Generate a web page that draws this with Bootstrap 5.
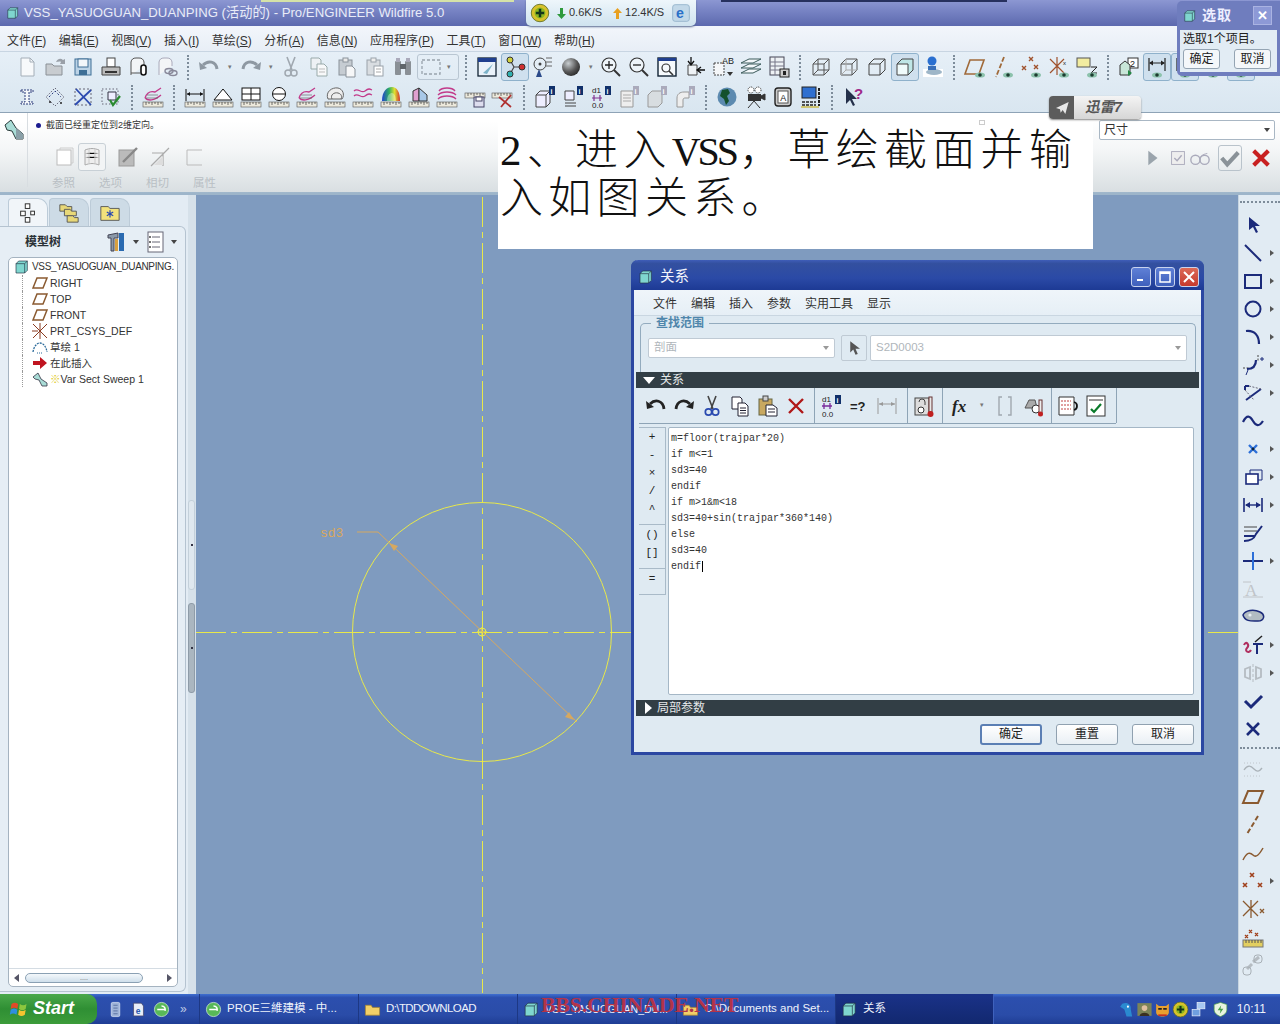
<!DOCTYPE html>
<html lang="zh">

<head>
    <meta charset="UTF-8" />
    <title>VSS_YASUOGUAN_DUANPING - Pro/ENGINEER Wildfire 5.0</title>
    <link href="https://cdn.jsdelivr.net/npm/bootstrap@5.3.0/dist/css/bootstrap.min.css" rel="stylesheet" />
    <style>
        html, body { width: 1280px; height: 1024px; overflow: hidden; margin: 0; }
        body { font-family: "Liberation Sans", "Noto Sans CJK SC", sans-serif; font-size: 12px; color: #222; background: #7f9bbf; line-height: 1.2; }
        .app { width: 1280px; height: 1024px; position: relative; }

        .win-title { height: 26px; background: linear-gradient(#8c97d2, #7a86c6 35%, #5c69ae); color: #e9ecf8; font-size: 13.2px; padding-left: 6px; gap: 4px; }
        .top-strip { top: 0; height: 2px; }
        .strip-a { left: 261px; width: 253px; background: #d5e2a8; }
        .strip-b { left: 721px; width: 286px; background: #26305e; }
        .menu-bar { height: 26px; background: linear-gradient(#f2f6fb, #e8eef6); padding: 6px 0 0 7px; gap: 12.5px; border-bottom: 1px solid #c8d5e2; color: #333; }
        .tool-area { height: 61px; background: linear-gradient(#e6eff7, #d9e6f0); border-bottom: 1px solid #8ea3b6; }
        .tool-row { height: 30px; padding-left: 13px; }
        .cell { width: 28px; height: 28px; flex: none; }
        .cell svg { width: 24px; height: 24px; }
        .cell.on { background: #cfe0ee; border: 1px solid #8fb1cb; border-radius: 3px; }
        .mini { flex: none; height: 28px; font-size: 7px; color: #777; }
        .w14 { width: 14px; }
        .w12 { width: 12px; }
        .vsep { flex: none; width: 2px; height: 25px; margin: 0 6px; border-left: 2px dotted #7d8c9a; }
        .drop-box { width: 42px; height: 26px; flex: none; border: 1px solid #b9c6d2; border-radius: 3px; margin-right: 0; }
        .drop-box svg { width: 24px; height: 24px; margin-left: 1px; }

        .dash { height: 82px; background: linear-gradient(#fff 10%, #f4f6f7 45%, #d9dfe2 96%, #9db5ca 97%); }
        .dash-left { width: 28px; border-right: 1px solid #d8dde1; height: 74px; padding-left: 2px; padding-top: 4px; }
        .dash-left svg { width: 24px; height: 24px; }
        .dash-msg { font-size: 9px; padding: 7px 0 0 8px; height: 29px; color: #333; }
        .dash-dot { width: 5px; height: 5px; border-radius: 50%; background: #1c1c90; margin-right: 5px; display: inline-block; }
        .dash-icons { padding-left: 22px; height: 30px; }
        .dash-icons .cell:nth-child(3) { margin-left: 8px; }
        .dash-icons .cell:nth-child(4) { margin-left: 4px; }
        .dash-icons .cell:nth-child(5) { margin-left: 6px; }
        .dash-icons .cell.on { background: #f2f4f5; border-color: #c8d0d6; }
        .dash-labels { padding: 5px 0 0 24px; gap: 24px; color: #b9bfc4; font-size: 11.5px; }
        .dash-right { width: 181px; margin-left: auto; padding: 7px 5px 0 0; }
        .type-pick { height: 20px; background: #fff; border: 1px solid #a9b7c4; border-radius: 2px; padding: 0 4px; color: #333; }
        .tri-dn { width: 0; height: 0; border-left: 3px solid transparent; border-right: 3px solid transparent; border-top: 4px solid #444; }
        .dash-btns { margin-top: 3px; padding-left: 42px; height: 30px; }
        .dash-btns svg { width: 22px; height: 22px; }
        .dash-ok { width: 24px; height: 26px; border: 1px solid #b9c3cb; border-radius: 3px; margin-left: 3px; }

        .caption { left: 498px; top: 114px; width: 595px; height: 135px; background: #fff; z-index: 3; padding: 13px 0 0 2px; font-family: "Liberation Serif", "Noto Sans CJK SC", serif; font-size: 43px; line-height: 47px; letter-spacing: 5.3px; color: #111; font-weight: 300; white-space: nowrap; }
        .latin-run { font-size: 40px; letter-spacing: -3px; margin-right: 3px; }
        .cap-dot { left: 481px; top: 6px; width: 6px; height: 5px; border: 1px solid #ccc; }

        .main-row { height: 799px; }
        .side { width: 188px; background: #e3ecf4; }
        .sash { width: 8px; background: #d6e1ea; }
        .sash-grip { left: 0; width: 7px; border-radius: 3px; }
        .grip-one { top: 305px; height: 90px; background: #dfe8ef; border: 1px solid #c4d0da; }
        .grip-two { top: 408px; height: 90px; background: #aab6c0; border: 1px solid #8f9ca8; }
        .grip-dot { left: 2px; top: 43px; width: 2px; height: 2px; background: #334; }
        .tab-row { height: 31px; padding: 3px 0 0 8px; gap: 1px; }
        .side-tab { width: 40px; height: 28px; border-radius: 4px 10px 0 0; background: #cddbe6; border: 1px solid #bccbd8; border-bottom: 0; }
        .side-tab.cur { background: #f1f5f9; }
        .side-tab svg { width: 22px; height: 22px; }
        .side-box { margin-right: 2px; height: 766px; border: 1px solid #b5c3d0; border-left: 0; border-radius: 0 6px 6px 0; background: #e6eef5; }
        .side-head { height: 30px; padding-left: 25px; font-weight: 700; color: #2a3136; }
        .side-head svg { width: 24px; height: 24px; }
        .tree-box { margin-left: 8px; width: 170px; height: 730px; background: #fff; border: 1px solid #a5b3c0; border-radius: 5px; overflow: hidden; }
        .tree-list { padding: 1px 0 0 5px; font-size: 10.5px; color: #333; white-space: nowrap; }
        .tree-list li { height: 16px; }
        .tree-list svg { width: 16px; height: 16px; margin-right: 2px; flex: none; }
        .tree-root { font-size: 10px; letter-spacing: -.35px; }
        .tree-item { padding-left: 9px; border-left: 1px dotted #999; margin-left: 8px; }
        .spark { color: #e0c820; }
        .scroll-row { height: 18px; margin-top: auto; border-top: 1px solid #d4dce3; padding: 0 5px; }
        .scroll-thumb { width: 118px; height: 10px; border: 1px solid #8aa0b3; border-radius: 5px; background: linear-gradient(#f4f8fb, #cfdfeb); color: #666; font-size: 7px; line-height: 7px; margin: 0 auto 0 6px; }
        .tri-l { width: 0; height: 0; border-top: 4px solid transparent; border-bottom: 4px solid transparent; border-right: 5px solid #556; }
        .tri-r { width: 0; height: 0; border-top: 4px solid transparent; border-bottom: 4px solid transparent; border-left: 5px solid #556; }

        .canvas-area { width: 1042px; height: 799px; background: #7f9bbf; }
        .canvas-area svg { display: block; }
        .right-bar { width: 42px; background: #e1ebf3; padding-top: 16px; border-left: 1px solid #c7d5e1; }
        .rb-row { height: 28px; }
        .rb-row svg { width: 24px; height: 24px; }
        .rb-tri { width: 0; height: 0; border-top: 3px solid transparent; border-bottom: 3px solid transparent; border-left: 4px solid #555; margin-left: 3px; }
        .rb-sep { height: 8px; margin: 4px 0 0 1px; border-top: 2px dotted #7d8c9a; }
        .rb-top { left: 1px; right: 0; top: 6px; border-top: 2px dotted #7d8c9a; }

        .task-bar { height: 30px; background: linear-gradient(#3f6fd0, #2c4fae 12%, #2a4ca8 70%, #1f3d94); color: #eef2fb; }
        .start-btn { width: 97px; height: 30px; border-radius: 0 10px 10px 0; background: linear-gradient(#4aa84a, #2f8f34 50%, #3c9c3a); color: #fff; font-size: 18px; font-style: italic; font-weight: 700; padding-left: 9px; gap: 4px; }
        .quick { width: 102px; padding-left: 10px; gap: 6px; }
        .quick svg, .task-item svg, .tray svg { width: 17px; height: 17px; flex: none; }
        .task-item { width: 159px; height: 30px; padding-left: 5px; gap: 5px; border-left: 1px solid #1d3884; white-space: nowrap; overflow: hidden; font-size: 11.5px; }
        .task-item.cur { background: linear-gradient(#1a3288, #12286f); border-right: 1px solid #3f62bd; }
        .tight-run { letter-spacing: -.6px; }
        .small-run { font-size: 10.5px; }
        .tray { margin-left: auto; padding-right: 14px; gap: 1px; }
        .clock { margin-left: 7px; font-size: 12px; }
        .mark-text { left: 541px; top: 992px; z-index: 6; font-family: "Liberation Serif", serif; font-size: 22px; font-weight: 700; letter-spacing: -.3px; color: #b2344a; white-space: nowrap; }

        .net-box { left: 526px; top: 0; width: 170px; height: 26px; z-index: 4; background: linear-gradient(#eef6fb, #cfe3ef); border-radius: 0 0 5px 5px; box-shadow: 0 1px 2px #5a6a90; padding-left: 4px; font-size: 11px; color: #333; gap: 3px; }
        .net-box svg { width: 20px; height: 20px; flex: none; }
        .net-arrow { width: 9px; height: 11px; flex: none; }
        .net-box svg.net-arrow { width: 9px; height: 11px; }
        .pick-box { left: 1177px; top: 1px; width: 103px; height: 75px; z-index: 5; background: #6f7dbe; border-radius: 5px 0 0 5px; padding: 0 3px 3px 3px; }
        .pick-head { height: 29px; color: #eef; font-size: 14px; font-weight: 700; gap: 5px; padding-left: 3px; letter-spacing: 1px; }
        .pick-x { margin-left: auto; margin-right: 5px; width: 19px; height: 19px; background: #8d99d6; border: 1px solid #aab3e2; color: #fff; font-size: 13px; }
        .pick-body { background: #e2ecf4; height: 42px; padding: 2px 2px 0 3px; font-size: 12px; color: #222; }
        .pick-line { margin-top: 3px; }
        .pick-btn { width: 37px; height: 20px; padding: 0; font-size: 12px; line-height: 18px; background: #f4f7fa; border: 1px solid #94a4b3; border-radius: 3px; color: #222; }
        .thunder { left: 1049px; top: 96px; width: 92px; height: 23px; z-index: 4; border-radius: 4px; background: linear-gradient(#f4f4f4, #d6d6d6); box-shadow: 0 1px 2px #888; overflow: hidden; color: #555; font-weight: 700; font-style: italic; font-size: 14.5px; }
        .thunder-ic { width: 25px; height: 23px; background: #5c5c5c; margin-right: 11px; }
        .thunder-ic svg { width: 16px; height: 16px; }

        .rel-win { left: 631px; top: 260px; width: 573px; height: 495px; z-index: 4; background: #dfeaf2; border: 3px solid #2b47a2; border-top: 0; border-radius: 7px 7px 0 0; }
        .rel-title { height: 30px; margin: 0 -3px; padding: 3px 5px 0 7px; border-radius: 7px 7px 0 0; background: linear-gradient(#3f5db8, #33509f 12%, #2b4aa6 60%, #1d3a94); color: #f2f4fb; font-size: 14.5px; gap: 6px; }
        .rel-title > svg { width: 16px; height: 16px; }
        .cap-btn { width: 20px; height: 20px; margin-left: -2px; border-radius: 3px; border: 1px solid #c8d3ee; background: linear-gradient(#5f80d6, #3f60bc); color: #fff; }
        .cap-btn.close { background: linear-gradient(#dc6a58, #c63a2e); }
        .cap-btn svg { width: 14px; height: 14px; }
        .rel-menu { height: 26px; padding: 3px 0 0 19px; gap: 14px; color: #333; background: linear-gradient(#eff5fa, #e6eff6); border-bottom: 1px solid #c9d6e1; }
        .find-group { position: relative; height: 49px; margin: 7px 5px 0 6px; border: 1px solid #93abbe; border-bottom: 0; border-radius: 5px 5px 0 0; padding: 11px 8px 0 7px; }
        .find-legend { left: 10px; top: -8px; background: #dfeaf2; padding: 0 5px; font-weight: 700; color: #4f86ab; }
        .combo { height: 20px; background: #fff; border: 1px solid #bfcad4; border-radius: 2px; color: #b0b6bb; padding: 0 5px; font-size: 11.5px; flex: none; }
        .combo .tri-dn { border-top-color: #999; }
        .combo-a { width: 187px; }
        .combo-b { width: 317px; height: 26px; }
        .pick-arrow { width: 26px; height: 26px; margin: 0 3px 0 6px; border: 1px solid #bfcad4; border-radius: 2px; flex: none; }
        .pick-arrow svg { width: 18px; height: 18px; }
        .sect-bar { height: 16px; margin: 0 2px; background: #323e45; color: #e4e8ea; padding-left: 7px; gap: 5px; }
        .sect-low { margin-top: 4px; }
        .tri-w { width: 0; height: 0; border-left: 6px solid transparent; border-right: 6px solid transparent; border-top: 7px solid #fff; }
        .tri-wr { width: 0; height: 0; border-top: 6px solid transparent; border-bottom: 6px solid transparent; border-left: 7px solid #fff; margin-left: 2px; }
        .rel-tools { height: 36px; margin: 0 0 0 5px; width: 477px; border-bottom: 1px solid #8ea4b6; padding-left: 3px; }
        .rel-tools .cell { height: 32px; }
        .rel-sep { flex: none; height: 35px; width: 1px; background: #8ea4b6; margin: 0 2px 0 4px; }
        .push2 { margin-right: 2px; }
        .pull2 { margin-left: 2px; }
        .rel-edit { height: 269px; margin: 3px 7px 0 5px; }
        .op-col { width: 27px; height: 168px; border: 1px solid #a9bac8; border-left: 0; margin-right: 2px; font-family: "Liberation Mono", monospace; font-size: 11px; color: #222; padding-top: 3px; flex: none; }
        .op-col span { height: 18px; }
        .op-line { border-top: 1px solid #a9bac8; margin: 3px 0 4px; }
        .code-area { width: 527px; height: 268px; background: #fff; border: 1px solid #a5b7c6; border-radius: 2px; font-family: "Liberation Mono", "Noto Sans CJK SC", monospace; font-size: 10px; line-height: 16px; color: #333; padding: 3px 0 0 2px; white-space: pre; }
        .caret-bar { border-right: 1px solid #000; padding-right: 1px; }
        .rel-foot { padding: 8px 7px 0 0; gap: 14px; }
        .rel-btn { width: 62px; height: 21px; padding: 0; font-size: 12px; line-height: 19px; background: linear-gradient(#fff, #e9eff4); border: 1px solid #90a1b0; border-radius: 3px; color: #222; }
        .rel-btn.dflt { border: 2px solid #5b7fb4; line-height: 17px; }
    </style>
</head>

<body>
    <svg width="0" height="0" class="position-absolute">
        <defs>
            <radialGradient id="sg" cx=".35" cy=".3" r=".8"><stop offset="0" stop-color="#c8cdd0" /><stop offset=".6" stop-color="#555" /><stop offset="1" stop-color="#222" /></radialGradient>
            <linearGradient id="rg" x1="0" x2="1"><stop offset="0" stop-color="#2040d0" /><stop offset=".4" stop-color="#30b060" /><stop offset=".7" stop-color="#e0e030" /><stop offset="1" stop-color="#d03030" /></linearGradient>
        </defs>
    </svg>
    <svg width="0" height="0" class="d-none">
        <defs>
            <g id="rul"><rect x="2" y="17" width="20" height="5" fill="#ece9dc" stroke="#555" stroke-width=".6" /><path d="M5 17v3M8 17v2M11 17v3M14 17v2M17 17v3M20 17v2" stroke="#333" stroke-width=".7" /></g>
            <g id="eye"><ellipse cx="17" cy="20" rx="5" ry="2.6" fill="#8cc2ac" /><circle cx="17" cy="20" r="1.8" fill="#1c3c30" /></g>
        </defs>
        <symbol id="cube" viewBox="0 0 24 24"><path d="M3 7l4-4h13v14l-4 4H3z" fill="#7fd6cf" stroke="#234" /><path d="M3 7h13v14M16 7l4-4" fill="none" stroke="#234" /></symbol>
        <symbol id="new" viewBox="0 0 24 24"><path d="M6 3h9l4 4v14H6z" fill="#f7f9fb" stroke="#a4aeb8" /><path d="M15 3v4h4" fill="none" stroke="#a4aeb8" /></symbol>
        <symbol id="open" viewBox="0 0 24 24"><path d="M3 20V9h6l2 2h8v9z" fill="#c8ccd0" stroke="#8a9096" /><path d="M13 7c2-4 5-4 7-2l2-1v5h-5l1-2c-1-1-3 0-5 0z" fill="#9aa0a8" /></symbol>
        <symbol id="save" viewBox="0 0 24 24"><rect x="4" y="4" width="16" height="16" fill="#bcd3e6" stroke="#3e6f96" /><rect x="7" y="4" width="10" height="8" fill="#f2f6fa" stroke="#3e6f96" /><rect x="8" y="15" width="8" height="5" fill="#3e6f96" /></symbol>
        <symbol id="print" viewBox="0 0 24 24"><rect x="8" y="3" width="8" height="9" fill="#fff" stroke="#444" /><path d="M3 12h18v8H3z" fill="#bbb" stroke="#444" /><rect x="6" y="16" width="12" height="2" fill="#333" /></symbol>
        <symbol id="clip" viewBox="0 0 24 24"><path d="M4 20V7a5 5 0 0 1 5-4h3a5 5 0 0 1 5 4v4" fill="#f3f5f7" stroke="#555" /><path d="M4 18h9" stroke="#555" /><rect x="14" y="10" width="5" height="10" rx="2.5" fill="#fff" stroke="#111" stroke-width="1.6" /></symbol>
        <symbol id="link" viewBox="0 0 24 24"><path d="M4 20V7a5 5 0 0 1 5-4h3a5 5 0 0 1 5 4v4" fill="#f3f5f7" stroke="#aab" /><ellipse cx="14" cy="16" rx="4" ry="2.5" fill="none" stroke="#889" stroke-width="1.4" /><ellipse cx="18" cy="18" rx="4" ry="2.5" fill="none" stroke="#889" stroke-width="1.4" /></symbol>
        <symbol id="undo" viewBox="0 0 24 24"><path d="M6 10c5-5 13-4 14 4" fill="none" stroke="#8e98a2" stroke-width="3" /><path d="M2 7l1 8 7-2z" fill="#8e98a2" /></symbol>
        <symbol id="redo" viewBox="0 0 24 24"><path d="M18 10c-5-5-13-4-14 4" fill="none" stroke="#8e98a2" stroke-width="3" /><path d="M22 7l-1 8-7-2z" fill="#8e98a2" /></symbol>
        <symbol id="cut" viewBox="0 0 24 24"><path d="M8 2l5 13M16 2l-5 13" stroke="#a0a8b0" stroke-width="1.6" /><circle cx="9" cy="18" r="3" fill="none" stroke="#a0a8b0" stroke-width="1.5" /><circle cx="15" cy="18" r="3" fill="none" stroke="#a0a8b0" stroke-width="1.5" /></symbol>
        <symbol id="copy" viewBox="0 0 24 24"><path d="M4 3h8l2 2v9H4z" fill="#eef1f4" stroke="#9aa" /><path d="M10 9h7l3 3v9H10z" fill="#f8f9fa" stroke="#9aa" /><path d="M12 14h6M12 17h6" stroke="#bbb" /></symbol>
        <symbol id="paste" viewBox="0 0 24 24"><rect x="4" y="5" width="13" height="15" fill="#c6ccd2" stroke="#8a929a" /><rect x="8" y="3" width="5" height="4" fill="#e9e9e9" stroke="#8a929a" /><path d="M11 11h6l3 3v8h-9z" fill="#f6f7f8" stroke="#8a929a" /></symbol>
        <symbol id="spec" viewBox="0 0 24 24"><rect x="4" y="5" width="13" height="15" fill="#d9dde1" stroke="#9aa2aa" /><rect x="8" y="3" width="5" height="4" fill="#eee" stroke="#9aa2aa" /><rect x="11" y="11" width="9" height="10" fill="#fff" stroke="#9aa2aa" /><path d="M13 14h5M13 17h5" stroke="#aaa" /></symbol>
        <symbol id="bino" viewBox="0 0 24 24"><rect x="4" y="6" width="6" height="14" rx="1" fill="#8a9096" /><rect x="14" y="6" width="6" height="14" rx="1" fill="#8a9096" /><rect x="9" y="9" width="6" height="5" fill="#5f656a" /><rect x="5" y="3" width="4" height="4" fill="#aab" /><rect x="15" y="3" width="4" height="4" fill="#aab" /></symbol>
        <symbol id="dash" viewBox="0 0 24 24"><rect x="3" y="5" width="18" height="14" fill="none" stroke="#98a2ac" stroke-width="1.3" stroke-dasharray="3 2" /></symbol>
        <symbol id="repaint" viewBox="0 0 24 24"><rect x="3" y="3" width="18" height="18" fill="#eaf2fa" stroke="#123" stroke-width="1.3" /><rect x="3" y="3" width="18" height="4" fill="#1f3f8f" /><path d="M8 18l10-9-6 10z" fill="#7cb2c8" /></symbol>
        <symbol id="node" viewBox="0 0 24 24"><path d="M7 5l4 7-4 7M11 12h8" fill="none" stroke="#444" stroke-width="1.2" /><circle cx="7" cy="5" r="3" fill="#d0d040" stroke="#333" /><circle cx="7" cy="19" r="3" fill="#30b0b0" stroke="#333" /><circle cx="19" cy="12" r="3" fill="#d03030" stroke="#333" /></symbol>
        <symbol id="spin" viewBox="0 0 24 24"><circle cx="9" cy="9" r="6" fill="none" stroke="#444" /><circle cx="9" cy="9" r="1.5" fill="#444" /><path d="M15 3h6M15 7h6M15 11h6" stroke="#666" /><path d="M5 22l3-8 3 8z" fill="#2b4a8a" /></symbol>
        <symbol id="sphere" viewBox="0 0 24 24"><circle cx="12" cy="12" r="9" fill="url(#sg)" /></symbol>
        <symbol id="zin" viewBox="0 0 24 24"><circle cx="10" cy="10" r="7" fill="#eef4f9" stroke="#333" stroke-width="1.2" /><path d="M6 10h8M10 6v8" stroke="#222" stroke-width="1.3" /><path d="M15 15l6 6" stroke="#333" stroke-width="2" /></symbol>
        <symbol id="zout" viewBox="0 0 24 24"><circle cx="10" cy="10" r="7" fill="#eef4f9" stroke="#333" stroke-width="1.2" /><path d="M6 10h8" stroke="#222" stroke-width="1.3" /><path d="M15 15l6 6" stroke="#333" stroke-width="2" /></symbol>
        <symbol id="refit" viewBox="0 0 24 24"><rect x="3" y="3" width="18" height="18" fill="#f6fafd" stroke="#123" stroke-width="1.4" /><rect x="3" y="3" width="18" height="3" fill="#1f3f8f" /><circle cx="11" cy="13" r="4" fill="none" stroke="#333" stroke-width="1.2" /><path d="M14 16l4 4" stroke="#333" stroke-width="1.6" /></symbol>
        <symbol id="orient" viewBox="0 0 24 24"><path d="M5 10h9v10H5z" fill="#eef2f5" stroke="#444" /><path d="M8 2v7M5 6l3 4 3-4M22 15h-7M18 12l-4 3 4 3" fill="none" stroke="#111" stroke-width="1.3" /></symbol>
        <symbol id="ab" viewBox="0 0 24 24"><path d="M3 8h10v12H3z" fill="#f5f7f9" stroke="#444" stroke-dasharray="2 1" /><text x="11" y="9" font-size="9" font-family="Liberation Sans" fill="#222">AB</text><path d="M16 17h6l-3 4z" fill="#333" /></symbol>
        <symbol id="layers" viewBox="0 0 24 24"><path d="M2 8l8-4h12l-8 4zM2 13l8-4h12l-8 4zM2 18l8-4h12l-8 4z" fill="#f4f8fb" stroke="#3a5a5a" /></symbol>
        <symbol id="table" viewBox="0 0 24 24"><rect x="3" y="2" width="14" height="18" fill="#eef2f5" stroke="#445" /><path d="M3 7h14M3 11h14M3 15h14M8 2v18" stroke="#778" /><rect x="13" y="14" width="9" height="8" fill="#ccc" stroke="#222" /><rect x="16" y="16" width="3" height="4" fill="#222" /></symbol>
        <symbol id="wire" viewBox="0 0 24 24"><path d="M4 9l5-5h11v11l-5 5H4zM4 9h11v11M15 9l5-5M9 4v11H20M9 15l-5 5" fill="none" stroke="#555" /></symbol>
        <symbol id="wire2" viewBox="0 0 24 24"><path d="M4 9l5-5h11v11l-5 5H4zM4 9h11v11M15 9l5-5" fill="none" stroke="#555" /><path d="M9 4v11H20M9 15l-5 5" fill="none" stroke="#aaa" /></symbol>
        <symbol id="wire3" viewBox="0 0 24 24"><path d="M4 9l5-5h11v11l-5 5H4zM4 9h11v11M15 9l5-5" fill="none" stroke="#444" /></symbol>
        <symbol id="shade" viewBox="0 0 24 24"><path d="M4 9l5-5h11v11l-5 5z" fill="#bfe6e6" /><path d="M4 9h11v11H4z" fill="#f0fbfb" stroke="#444" /><path d="M4 9l5-5h11v11l-5 5" fill="none" stroke="#444" /></symbol>
        <symbol id="pin" viewBox="0 0 24 24"><rect x="2" y="14" width="20" height="8" fill="#fff" /><ellipse cx="13" cy="17" rx="8" ry="3" fill="#9eb6c8" /><circle cx="11" cy="6" r="4.5" fill="#2a6fd0" /><path d="M7 11h8v4H7z" fill="#3a6fb8" /></symbol>
        <symbol id="plane-e" viewBox="0 0 24 24"><path d="M7 5h14l-5 14H2z" fill="none" stroke="#a06a3a" stroke-width="1.6" /><use href="#eye" /></symbol>
        <symbol id="axis-e" viewBox="0 0 24 24"><path d="M13 2L5 22" stroke="#a06a3a" stroke-width="1.8" stroke-dasharray="5 2" /><use href="#eye" /></symbol>
        <symbol id="pts-e" viewBox="0 0 24 24"><g stroke="#a0522d" stroke-width="1.4"><path d="M10 2l4 4M14 2l-4 4M3 11l4 4M7 11l-4 4M15 10l4 4M19 10l-4 4" /></g><use href="#eye" /></symbol>
        <symbol id="csys-e" viewBox="0 0 24 24"><path d="M3 4l14 14M17 4L3 18M10 2v18" stroke="#a0522d" stroke-width="1.2" /><text x="16" y="10" font-size="6" fill="#222">x</text><use href="#eye" /></symbol>
        <symbol id="note-e" viewBox="0 0 24 24"><rect x="2" y="3" width="13" height="9" fill="#f2eca0" stroke="#555" /><path d="M16 12h6l-6 6h6" fill="none" stroke="#222" /><use href="#eye" /></symbol>
        <symbol id="swap" viewBox="0 0 24 24"><rect x="11" y="3" width="10" height="10" fill="#fff" stroke="#333" /><text x="13" y="12" font-size="9" fill="#222">2</text><path d="M3 10l5-4 5 4v10H3z" fill="#c8e6d8" stroke="#333" /><path d="M11 15l4 3-4 3z" fill="#284" /></symbol>
        <symbol id="dim-e" viewBox="0 0 24 24"><path d="M4 3v13M20 3v13M5 8h14" fill="none" stroke="#222" stroke-width="1.2" /><path d="M4 8l4-2.5v5zM20 8l-4-2.5v5z" fill="#222" /><use href="#eye" x="-5" /></symbol>

        <symbol id="ibeam" viewBox="0 0 24 24"><path d="M6 5h12v2h-4v10h4v2H6v-2h4V7H6z" fill="#f4f7fa" stroke="#2a3a7a" stroke-dasharray="2 1" /></symbol>
        <symbol id="diam" viewBox="0 0 24 24"><path d="M12 3l9 9-9 9-9-9z" fill="none" stroke="#667" stroke-dasharray="1.5 1.5" /><path d="M6 12l6-6 6 6" fill="none" stroke="#2a3a7a" stroke-dasharray="2 2" /><circle cx="7" cy="17" r="1" fill="#222" /><circle cx="18" cy="18" r="1" fill="#222" /></symbol>
        <symbol id="crossbox" viewBox="0 0 24 24"><rect x="4" y="4" width="16" height="16" fill="none" stroke="#667" stroke-dasharray="2 2" /><path d="M5 4l15 16M4 20L20 5" stroke="#2b4ab0" stroke-width="1.8" /></symbol>
        <symbol id="dotchk" viewBox="0 0 24 24"><rect x="3" y="4" width="16" height="15" fill="none" stroke="#667" stroke-dasharray="1.5 2" /><path d="M9 7h8v8H9z" fill="#eef" stroke="#334" /><path d="M11 15l3 5 7-9" fill="none" stroke="#2a8a30" stroke-width="2.2" /></symbol>
        <symbol id="curve-r" viewBox="0 0 24 24"><path d="M4 13c2-6 6-7 10-6l6-4M4 13c3 3 9 3 16-3" fill="none" stroke="#c23a8a" stroke-width="1.3" /><path d="M6 10h11M5 13h12" stroke="#555" stroke-width=".6" /><use href="#rul" /></symbol>
        <symbol id="dim-r" viewBox="0 0 24 24"><path d="M3 4v12M21 4v12" stroke="#111" /><path d="M4 9h16" stroke="#111" /><path d="M4 9l3-2v4zM20 9l-3-2v4z" fill="#111" /><use href="#rul" /></symbol>
        <symbol id="tri-r" viewBox="0 0 24 24"><path d="M12 4L3 15h18z" fill="#fff" stroke="#111" /><use href="#rul" /></symbol>
        <symbol id="grid-r" viewBox="0 0 24 24"><rect x="3" y="3" width="18" height="12" fill="#fff" stroke="#111" /><path d="M3 9h18M12 3v12" stroke="#111" /><use href="#rul" /></symbol>
        <symbol id="circ-r" viewBox="0 0 24 24"><circle cx="12" cy="9" r="6.5" fill="#fff" stroke="#111" /><path d="M6 9h12" stroke="#111" /><use href="#rul" /></symbol>
        <symbol id="wav-r" viewBox="0 0 24 24"><path d="M5 14c-3-7 4-12 10-11 5 1 7 7 4 11zM9 14c-2-4 2-7 6-6s4 4 3 6" fill="#eee" stroke="#666" /><use href="#rul" /></symbol>
        <symbol id="pink-r" viewBox="0 0 24 24"><path d="M3 6c4-4 7 3 11 0s5-2 7-1M3 11c4-4 7 3 11 0s5-2 7-1" fill="none" stroke="#c23a8a" stroke-width="1.3" /><use href="#rul" /></symbol>
        <symbol id="rain-r" viewBox="0 0 24 24"><path d="M3 16C3 6 8 2 13 2s8 5 8 14z" fill="url(#rg)" /><path d="M8 16c0-6 3-8 5-8s4 3 4 8z" fill="#fff" opacity=".35" /><use href="#rul" /></symbol>
        <symbol id="solid-r" viewBox="0 0 24 24"><path d="M6 16V6l6-3v13z" fill="#e0a0d0" stroke="#333" /><path d="M12 3l8 7v6h-8z" fill="#a8c8e8" stroke="#333" /><use href="#rul" /></symbol>
        <symbol id="stack-r" viewBox="0 0 24 24"><path d="M4 6c3-4 13-4 16 0M3 10c4-4 14-4 18 0M3 14c4-4 14-4 18 0" fill="none" stroke="#c23a8a" stroke-width="1.4" /><use href="#rul" /></symbol>
        <symbol id="rsave" viewBox="0 0 24 24"><g transform="translate(0 -9)"><use href="#rul" /></g><rect x="11" y="12" width="10" height="10" fill="#dde" stroke="#446" /><rect x="13" y="12" width="6" height="4" fill="#fff" stroke="#446" /></symbol>
        <symbol id="rdel" viewBox="0 0 24 24"><g transform="translate(-1 -9)"><use href="#rul" /></g><path d="M8 12l12 10M20 10l-10 12" stroke="#b03030" stroke-width="1.8" /></symbol>
        <symbol id="cube-i" viewBox="0 0 24 24"><path d="M3 10l4-4h10v12l-4 4H3z" fill="#eef" stroke="#444" /><path d="M3 10h10v12M13 10l4-4" fill="none" stroke="#444" /><rect x="16" y="1" width="6" height="9" fill="#10306a" /><text x="17.5" y="8.5" font-size="7" fill="#fff" font-weight="700">i</text></symbol>
        <symbol id="cubel-i" viewBox="0 0 24 24"><path d="M4 6h9v9H4z" fill="#eef" stroke="#444" /><path d="M4 18h11M4 21h11" stroke="#444" /><rect x="16" y="1" width="6" height="9" fill="#10306a" /><text x="17.5" y="8.5" font-size="7" fill="#fff" font-weight="700">i</text></symbol>
        <symbol id="d1-i" viewBox="0 0 24 24"><text x="3" y="8" font-size="8" fill="#222">d1</text><path d="M5 10v6M11 10v6M3 13h10" stroke="#803090" stroke-width="1.2" /><text x="3" y="23" font-size="8" fill="#222">0.0</text><rect x="16" y="1" width="6" height="9" fill="#10306a" /><text x="17.5" y="8.5" font-size="7" fill="#fff" font-weight="700">i</text></symbol>
        <symbol id="page-i" viewBox="0 0 24 24"><path d="M4 6h12v16H4z" fill="#eee" stroke="#999" /><path d="M6 10h8M6 13h8M6 16h8" stroke="#aaa" /><rect x="16" y="1" width="6" height="9" fill="#aab" /><text x="17.5" y="8.5" font-size="7" fill="#fff" font-weight="700">i</text></symbol>
        <symbol id="gcube-i" viewBox="0 0 24 24"><path d="M3 10l4-4h10v12l-4 4H3z" fill="#d8dde0" stroke="#999" /><rect x="16" y="1" width="6" height="9" fill="#aab" /><text x="17.5" y="8.5" font-size="7" fill="#fff" font-weight="700">i</text></symbol>
        <symbol id="pipe-i" viewBox="0 0 24 24"><path d="M4 22V13c0-4 3-6 7-6h5v6h-4c-1 0-2 .5-2 2v7z" fill="#eee" stroke="#999" /><rect x="16" y="1" width="6" height="9" fill="#aab" /><text x="17.5" y="8.5" font-size="7" fill="#fff" font-weight="700">i</text></symbol>
        <symbol id="globe" viewBox="0 0 24 24"><circle cx="12" cy="12" r="9.5" fill="#5c8ab0" /><path d="M7 5l6-1 2 4-3 3 2 5-3 4-2-6-4-3z" fill="#14502c" /></symbol>
        <symbol id="camera" viewBox="0 0 24 24"><circle cx="8" cy="5" r="3" fill="#fff" stroke="#222" stroke-dasharray="1 1" /><circle cx="15" cy="5" r="3" fill="#fff" stroke="#222" stroke-dasharray="1 1" /><rect x="5" y="9" width="13" height="7" fill="#333" /><path d="M18 11l4-2v6l-4-2zM11 16l-6 7M11 16l6 7" fill="#333" stroke="#333" /></symbol>
        <symbol id="abox" viewBox="0 0 24 24"><rect x="4" y="3" width="16" height="18" rx="3" fill="#ccc" stroke="#222" stroke-width="1.4" /><rect x="7" y="6" width="10" height="12" fill="#fff" stroke="#555" /><text x="9.2" y="15.5" font-size="9" font-family="Liberation Sans" fill="#222">A</text></symbol>
        <symbol id="monitor" viewBox="0 0 24 24"><rect x="3" y="2" width="14" height="11" fill="#3070d0" stroke="#222" /><path d="M3 17h14M3 20h14" stroke="#222" stroke-width="1.5" stroke-dasharray="3 1" /><path d="M20 3v18" stroke="#222" stroke-width="2" stroke-dasharray="3 1" /><path d="M2 22h18" stroke="#c8b020" stroke-width="1.2" /></symbol>
        <symbol id="help" viewBox="0 0 24 24"><path d="M5 3v16l4-4 3 6 2-1-3-6h5z" fill="#24304a" /><text x="13" y="14" font-size="15" font-weight="700" fill="#a02888" font-family="Liberation Sans">?</text></symbol>
        <symbol id="sweep" viewBox="0 0 24 24"><path d="M3 8l6-5 5 8 7 6v5h-7l-4-8-5-1z" fill="#a9dcd6" stroke="#2a3a3a" /><path d="M14 11l7 6v5h-7z" fill="#8aa0a8" /></symbol>
        <symbol id="d-ref" viewBox="0 0 24 24"><rect x="5" y="5" width="14" height="15" fill="#fff" stroke="#bbb" /><path d="M8 5V3h13v15h-2" fill="none" stroke="#ccc" /></symbol>
        <symbol id="d-opt" viewBox="0 0 24 24"><path d="M5 5c5-2 9-2 14 0v15c-5-2-9-2-14 0z" fill="#eee" stroke="#aaa" /><path d="M5 9c5-2 9-2 14 0M5 13c5-2 9-2 14 0M9 4v15M15 4v15" stroke="#ccc" /></symbol>
        <symbol id="d-tan" viewBox="0 0 24 24"><rect x="3" y="5" width="15" height="16" fill="#bbb" stroke="#999" /><path d="M7 17L21 3" stroke="#888" stroke-width="2.4" /></symbol>
        <symbol id="d-nrm" viewBox="0 0 24 24"><path d="M3 21L21 3M4 8h11v13" fill="none" stroke="#aaa" stroke-width="1.2" /><path d="M6 20l9-9v9z" fill="#ddd" /></symbol>
        <symbol id="d-prop" viewBox="0 0 24 24"><path d="M20 5H5v15h15" fill="none" stroke="#bbb" /></symbol>
        <symbol id="tools" viewBox="0 0 24 24"><path d="M3 5l10-2v5H9v13H6V8H3z" fill="#8a98a8" stroke="#445" /><rect x="14" y="3" width="5" height="18" fill="#2a6ab0" /><rect x="10" y="9" width="3" height="12" fill="#d8a040" /></symbol>
        <symbol id="listd" viewBox="0 0 24 24"><rect x="5" y="2" width="15" height="20" fill="#fff" stroke="#667" /><path d="M9 7h8M9 12h8M9 17h8" stroke="#667" /><circle cx="7" cy="7" r="1" fill="#444" /><circle cx="7" cy="12" r="1" fill="#444" /><circle cx="7" cy="17" r="1" fill="#444" /></symbol>
        <symbol id="tree" viewBox="0 0 24 24"><rect x="9" y="2" width="5" height="5" fill="#fff" stroke="#222" /><rect x="4" y="10" width="5" height="5" fill="#fff" stroke="#222" /><rect x="9" y="17" width="5" height="5" fill="#fff" stroke="#222" /><rect x="15" y="10" width="4" height="4" fill="#fff" stroke="#222" /></symbol>
        <symbol id="folders" viewBox="0 0 24 24"><path d="M2 10V3h6l2 2h5v5z" fill="#e8d878" stroke="#555" /><path d="M7 15V8h6l2 2h5v5z" fill="#e8d878" stroke="#555" /><path d="M10 22v-7h6l2 2h4v5z" fill="#e8d878" stroke="#555" /></symbol>
        <symbol id="star-f" viewBox="0 0 24 24"><path d="M2 20V5h8l2 2h10v13z" fill="#f2e27c" stroke="#555" /><path d="M12 9v8M8.5 11l7 4M15.5 11l-7 4" stroke="#2848b0" stroke-width="1.3" /></symbol>
        <symbol id="dplane" viewBox="0 0 16 16"><path d="M5 3h10l-4 10H1z" fill="none" stroke="#8a5a30" stroke-width="1.5" /></symbol>
        <symbol id="dcsys" viewBox="0 0 16 16"><path d="M1 1l14 14M15 1L1 15M8 0v16M0 8h6" stroke="#8a3a20" /></symbol>
        <symbol id="dsketch" viewBox="0 0 16 16"><path d="M1 13c2-12 12-12 14 0" fill="none" stroke="#2a6a9a" stroke-dasharray="2 1" stroke-width="1.3" /><path d="M5 14h6" stroke="#2a6a9a" stroke-dasharray="1 1" /></symbol>
        <symbol id="dins" viewBox="0 0 16 16"><path d="M1 6h7V2l7 6-7 6v-4H1z" fill="#c01420" /></symbol>
        <symbol id="dsweep" viewBox="0 0 16 16"><path d="M1 6l5-4 3 6 6 4v3h-5l-3-6-4-1z" fill="#a9dcd6" stroke="#334" stroke-width=".8" /></symbol>

        <symbol id="r-arrow" viewBox="0 0 24 24"><path d="M8 4v13l4-3 3 6 2-1-3-6h5z" fill="#1b2a7a" /></symbol>
        <symbol id="r-line" viewBox="0 0 24 24"><path d="M4 4l16 16" stroke="#1b2a7a" stroke-width="2" /></symbol>
        <symbol id="r-rect" viewBox="0 0 24 24"><rect x="4" y="6" width="16" height="13" fill="none" stroke="#1b2a7a" stroke-width="2" /></symbol>
        <symbol id="r-circ" viewBox="0 0 24 24"><circle cx="12" cy="12" r="7.5" fill="none" stroke="#1b2a7a" stroke-width="2" /></symbol>
        <symbol id="r-arc" viewBox="0 0 24 24"><path d="M5 6c9-1 13 5 13 13" fill="none" stroke="#1b2a7a" stroke-width="2.2" /></symbol>
        <symbol id="r-fillet" viewBox="0 0 24 24"><path d="M2 15h6M17 2v6" stroke="#444" stroke-dasharray="2 1.5" /><path d="M6 16c6 0 9-3 9-9" fill="none" stroke="#1b2a7a" stroke-width="2.2" /><path d="M7 17l-2 5M19 6h4M21 4v4" stroke="#1b2a7a" /></symbol>
        <symbol id="r-cham" viewBox="0 0 24 24"><path d="M4 5h4M4 5v4M5 19L20 8" stroke="#1b2a7a" stroke-width="2" /><path d="M4 9l9 10M8 5l12 3" stroke="#667" stroke-dasharray="2 1.5" /></symbol>
        <symbol id="r-spline" viewBox="0 0 24 24"><path d="M2 13c4-8 7-6 10-1s6 6 10 0" fill="none" stroke="#1b2a7a" stroke-width="2.2" /></symbol>
        <symbol id="r-x" viewBox="0 0 24 24"><path d="M8 8l8 8M16 8l-8 8" stroke="#2c6fd8" stroke-width="2.4" /><circle cx="12" cy="12" r="1.4" fill="#123" /></symbol>
        <symbol id="r-off" viewBox="0 0 24 24"><rect x="5" y="9" width="12" height="10" fill="#fff" stroke="#1b2a7a" stroke-width="1.6" /><path d="M9 9V5h12v10h-4" fill="none" stroke="#1b2a7a" /></symbol>
        <symbol id="r-dim" viewBox="0 0 24 24"><path d="M3 5v14M21 5v14" stroke="#1b2a7a" stroke-width="1.6" /><path d="M5 12h14" stroke="#1b2a7a" stroke-width="1.4" /><path d="M4 12l5-3v6zM20 12l-5-3v6z" fill="#1b2a7a" /></symbol>
        <symbol id="r-mod" viewBox="0 0 24 24"><path d="M3 6h13M3 10h13" stroke="#444" /><path d="M3 20c7 0 10-2 12-7l6-8M3 15h11" fill="none" stroke="#1b2a7a" stroke-width="2" /></symbol>
        <symbol id="r-cross" viewBox="0 0 24 24"><path d="M2 12h20" stroke="#1b2a7a" stroke-width="2" /><path d="M12 3v18" stroke="#2c6fd8" stroke-width="2" /></symbol>
        <symbol id="r-text" viewBox="0 0 24 24"><text x="4" y="19" font-size="17" font-family="Liberation Serif" fill="#c0c4c8">A</text><path d="M2 20h20M2 5h8" stroke="#c0c4c8" /></symbol>
        <symbol id="r-pal" viewBox="0 0 24 24"><path d="M2 10c2-5 11-6 17-3s4 9-2 9-13 1-15-6z" fill="#b2bcc2" stroke="#1b2a7a" stroke-width="1.5" /><circle cx="9" cy="10" r="1.6" fill="#e8eef2" /></symbol>
        <symbol id="r-trim" viewBox="0 0 24 24"><path d="M3 12c2-5 6 0 3 3s2 6 4 2" fill="none" stroke="#b03060" stroke-width="2" /><path d="M12 11h10M16 11v10" stroke="#1b2a7a" stroke-width="2" /><path d="M14 9l7-6" stroke="#222" stroke-width="1.5" /></symbol>
        <symbol id="r-mir" viewBox="0 0 24 24"><path d="M12 3v18" stroke="#b5bcc2" stroke-dasharray="3 2" /><path d="M4 8l5-2v12l-5-2zM20 8l-5-2v12l5-2z" fill="none" stroke="#b5bcc2" stroke-width="1.8" /></symbol>
        <symbol id="r-ok" viewBox="0 0 24 24"><path d="M4 12l6 6L21 7" fill="none" stroke="#1b2a7a" stroke-width="3" /></symbol>
        <symbol id="r-no" viewBox="0 0 24 24"><path d="M6 6l12 12M18 6L6 18" stroke="#1b2a7a" stroke-width="2.6" /></symbol>
        <symbol id="r-gwave" viewBox="0 0 24 24"><path d="M3 13c4-6 7-4 10-1s5 3 8-1" fill="none" stroke="#aab2b8" stroke-width="1.3" /><path d="M3 6h18M3 19h18" stroke="#c0c6cc" stroke-dasharray="1 2" /></symbol>
        <symbol id="r-plane" viewBox="0 0 24 24"><path d="M7 6h15l-5 12H2z" fill="none" stroke="#8a5a30" stroke-width="2" /></symbol>
        <symbol id="r-axis" viewBox="0 0 24 24"><path d="M17 3L6 21" stroke="#8a5a30" stroke-width="2" stroke-dasharray="5 2.5" /></symbol>
        <symbol id="r-crv" viewBox="0 0 24 24"><path d="M2 19c4-8 7-8 10-5s6 0 10-7" fill="none" stroke="#8a5a30" stroke-width="1.5" /></symbol>
        <symbol id="r-pts" viewBox="0 0 24 24"><path d="M9 4l4 4M13 4l-4 4M2 14l4 4M6 14l-4 4M17 14l4 4M21 14l-4 4" stroke="#a0401c" stroke-width="1.6" /></symbol>
        <symbol id="r-csys" viewBox="0 0 24 24"><path d="M2 4l15 15M17 4L2 19M10 3v18M19 12l4 4M23 12l-4 4" stroke="#8a5a30" stroke-width="1.3" /></symbol>
        <symbol id="r-anal" viewBox="0 0 24 24"><path d="M8 5l3 3M11 5l-3 3M14 8l3 3M17 8l-3 3M4 10l3 3M7 10l-3 3" stroke="#a0401c" stroke-width="1.3" /><rect x="2" y="15" width="20" height="7" fill="#e3cf60" stroke="#777" /><path d="M5 15v3M8 15v3M11 15v3M14 15v3M17 15v3M20 15v3" stroke="#555" /></symbol>
        <symbol id="r-chain" viewBox="0 0 24 24"><path d="M6 16l5-5M12 9l6-5" stroke="#b5bcc2" stroke-width="3" fill="none" /><rect x="2" y="14" width="8" height="8" rx="3" fill="none" stroke="#a8b0b6" /><rect x="13" y="2" width="8" height="8" rx="3" fill="none" stroke="#a8b0b6" /></symbol>

        <symbol id="ln-undo" viewBox="0 0 24 24"><path d="M6 10c5-5 13-4 14 5" fill="none" stroke="#222" stroke-width="2.8" /><path d="M2 7l1 8 7-2z" fill="#222" /></symbol>
        <symbol id="ln-redo" viewBox="0 0 24 24"><path d="M18 10c-5-5-13-4-14 5" fill="none" stroke="#222" stroke-width="2.8" /><path d="M22 7l-1 8-7-2z" fill="#222" /></symbol>
        <symbol id="ln-cut" viewBox="0 0 24 24"><path d="M8 2l5 13M16 2l-5 13" stroke="#444" stroke-width="1.6" /><circle cx="8.5" cy="18" r="3.2" fill="none" stroke="#2a4ab0" stroke-width="1.7" /><circle cx="15.5" cy="18" r="3.2" fill="none" stroke="#2a4ab0" stroke-width="1.7" /></symbol>
        <symbol id="ln-copy" viewBox="0 0 24 24"><path d="M4 3h8l2 2v10H4z" fill="#fff" stroke="#223" /><path d="M10 9h7l3 3v10H10z" fill="#fff" stroke="#223" /><path d="M12 14h6M12 16.500h6M12 19h6" stroke="#223" /></symbol>
        <symbol id="ln-paste" viewBox="0 0 24 24"><rect x="3" y="5" width="13" height="16" fill="#c8a860" stroke="#664" /><rect x="7" y="2" width="5" height="5" fill="#ccc" stroke="#444" /><path d="M10 11h7l4 3v8H10z" fill="#fff" stroke="#223" /><path d="M12 15h7M12 18h7" stroke="#223" /></symbol>
        <symbol id="ln-del" viewBox="0 0 24 24"><path d="M5 5l14 14M19 5L5 19" stroke="#b01818" stroke-width="2.4" /></symbol>
        <symbol id="ln-d1" viewBox="0 0 24 24"><text x="3" y="8" font-size="8" fill="#222">d1</text><path d="M5 9v6M11 9v6M3 12h10" stroke="#7a2a9a" stroke-width="1.3" /><text x="3" y="23" font-size="8" fill="#222">0.0</text><rect x="16" y="1" width="6" height="9" fill="#10306a" /><text x="17.500" y="8.500" font-size="7" fill="#fff" font-weight="700">i</text></symbol>
        <symbol id="ln-eq" viewBox="0 0 24 24"><text x="3" y="17" font-size="13" font-weight="700" fill="#222" font-family="Liberation Sans">=?</text></symbol>
        <symbol id="ln-dim" viewBox="0 0 24 24"><path d="M3 4v16M21 4v16M4 10h16" stroke="#999" /><path d="M4 10l4-2v4zM20 10l-4-2v4z" fill="#999" /></symbol>
        <symbol id="ln-therm" viewBox="0 0 24 24"><rect x="3" y="4" width="14" height="17" fill="#ddd" stroke="#444" /><path d="M7 8a3 3 0 0 1 6 0v3" fill="none" stroke="#444" /><circle cx="9" cy="16" r="3" fill="#fff" stroke="#333" /><rect x="17" y="3" width="3" height="15" fill="#e8e8e8" stroke="#633" /><circle cx="18.500" cy="20" r="3" fill="#c02020" /></symbol>
        <symbol id="ln-fx" viewBox="0 0 24 24"><text x="3" y="18" font-size="17" font-style="italic" font-weight="700" font-family="Liberation Serif" fill="#222">fx</text></symbol>
        <symbol id="ln-br" viewBox="0 0 24 24"><path d="M9 3H6v18h3M15 3h3v18h-3" fill="none" stroke="#a0a8b0" stroke-width="1.4" /></symbol>
        <symbol id="ln-weight" viewBox="0 0 24 24"><path d="M4 14l4-8h6l2 8z" fill="#aaa" stroke="#555" /><circle cx="15" cy="15" r="4" fill="#fff" stroke="#333" /><rect x="18" y="6" width="3" height="13" fill="#eee" stroke="#633" /><circle cx="19.500" cy="20" r="2.500" fill="#c02020" /></symbol>
        <symbol id="ln-list" viewBox="0 0 24 24"><path d="M3 3h15v18H3z" fill="#fff" stroke="#333" /><path d="M5 7h10M5 11h10M5 15h10" stroke="#c04040" stroke-dasharray="2 1" /><path d="M18 8c4 1 4 7 0 8" fill="none" stroke="#111" stroke-width="1.8" /></symbol>
        <symbol id="ln-check" viewBox="0 0 24 24"><rect x="3" y="2" width="18" height="20" fill="#fff" stroke="#333" /><path d="M5 6h14" stroke="#333" /><path d="M7 15l3 3 7-8" fill="none" stroke="#0a7a2a" stroke-width="2.200" /></symbol>

        <symbol id="green-ie" viewBox="0 0 24 24"><circle cx="12" cy="12" r="10" fill="#58b858" stroke="#d8f0d8" /><path d="M6 12h12M12 7c4 0 6 3 5 7" fill="none" stroke="#fff" stroke-width="2.200" /></symbol>
        <symbol id="plus-c" viewBox="0 0 24 24"><circle cx="12" cy="12" r="10.500" fill="#d8c22c" stroke="#5a6a20" /><circle cx="12" cy="12" r="6.500" fill="#8cb820" /><path d="M12 7v10M7 12h10" stroke="#14361a" stroke-width="3" /></symbol>
        <symbol id="folder-y" viewBox="0 0 24 24"><path d="M2 20V6h8l2 3h10v11z" fill="#f2cf68" stroke="#a8842c" /></symbol>
        <symbol id="flag" viewBox="0 0 24 24"><path d="M3 6c3-2 5-2 8 0l-1 6c-3-2-5-2-8 0z" fill="#e04a28" /><path d="M13 6c3 2 5 2 8 0l-1 6c-3 2-5 2-8 0z" fill="#8cc63e" /><path d="M2 13c3-2 5-2 8 0l-1 6c-3-2-5-2-8 0z" fill="#2f8fe0" /><path d="M12 13c3 2 5 2 8 0l-1 6c-3 2-5 2-8 0z" fill="#f4c430" /></symbol>
    </svg>

    <div class="app">
        <div class="win-title d-flex align-items-center">
            <svg width="14" height="14"><use href="#cube" /></svg>
            <span>VSS_YASUOGUAN_DUANPING (活动的) - Pro/ENGINEER Wildfire 5.0</span>
        </div>
        <div class="menu-bar d-flex align-items-center">
            <span>文件(<u>F</u>)</span><span>编辑(<u>E</u>)</span><span>视图(<u>V</u>)</span><span>插入(<u>I</u>)</span><span>草绘(<u>S</u>)</span><span>分析(<u>A</u>)</span><span>信息(<u>N</u>)</span><span>应用程序(<u>P</u>)</span><span>工具(<u>T</u>)</span><span>窗口(<u>W</u>)</span><span>帮助(<u>H</u>)</span>
        </div>

        <div class="tool-area">
            <div class="tool-row d-flex align-items-center">
                <div class="cell d-flex align-items-center justify-content-center"><svg><use href="#new" /></svg></div>
                <div class="cell d-flex align-items-center justify-content-center"><svg><use href="#open" /></svg></div>
                <div class="cell d-flex align-items-center justify-content-center"><svg><use href="#save" /></svg></div>
                <div class="cell d-flex align-items-center justify-content-center"><svg><use href="#print" /></svg></div>
                <div class="cell d-flex align-items-center justify-content-center"><svg><use href="#clip" /></svg></div>
                <div class="cell d-flex align-items-center justify-content-center"><svg><use href="#link" /></svg></div>
                <div class="vsep"></div>
                <div class="cell d-flex align-items-center justify-content-center"><svg><use href="#undo" /></svg></div>
                <div class="mini w14 d-flex align-items-center justify-content-center">▾</div>
                <div class="cell d-flex align-items-center justify-content-center"><svg><use href="#redo" /></svg></div>
                <div class="mini w12 d-flex align-items-center justify-content-center">▾</div>
                <div class="cell d-flex align-items-center justify-content-center"><svg><use href="#cut" /></svg></div>
                <div class="cell d-flex align-items-center justify-content-center"><svg><use href="#copy" /></svg></div>
                <div class="cell d-flex align-items-center justify-content-center"><svg><use href="#paste" /></svg></div>
                <div class="cell d-flex align-items-center justify-content-center"><svg><use href="#spec" /></svg></div>
                <div class="cell d-flex align-items-center justify-content-center"><svg><use href="#bino" /></svg></div>
                <div class="drop-box d-flex align-items-center"><svg><use href="#dash" /></svg><span class="mini d-flex align-items-center ms-1">▾</span></div>
                <div class="vsep"></div>
                <div class="cell d-flex align-items-center justify-content-center"><svg><use href="#repaint" /></svg></div>
                <div class="cell on d-flex align-items-center justify-content-center"><svg><use href="#node" /></svg></div>
                <div class="cell d-flex align-items-center justify-content-center"><svg><use href="#spin" /></svg></div>
                <div class="cell d-flex align-items-center justify-content-center"><svg><use href="#sphere" /></svg></div>
                <div class="mini w12 d-flex align-items-center justify-content-center">▾</div>
                <div class="cell d-flex align-items-center justify-content-center"><svg><use href="#zin" /></svg></div>
                <div class="cell d-flex align-items-center justify-content-center"><svg><use href="#zout" /></svg></div>
                <div class="cell d-flex align-items-center justify-content-center"><svg><use href="#refit" /></svg></div>
                <div class="cell d-flex align-items-center justify-content-center"><svg><use href="#orient" /></svg></div>
                <div class="cell d-flex align-items-center justify-content-center"><svg><use href="#ab" /></svg></div>
                <div class="cell d-flex align-items-center justify-content-center"><svg><use href="#layers" /></svg></div>
                <div class="cell d-flex align-items-center justify-content-center"><svg><use href="#table" /></svg></div>
                <div class="vsep"></div>
                <div class="cell d-flex align-items-center justify-content-center"><svg><use href="#wire" /></svg></div>
                <div class="cell d-flex align-items-center justify-content-center"><svg><use href="#wire2" /></svg></div>
                <div class="cell d-flex align-items-center justify-content-center"><svg><use href="#wire3" /></svg></div>
                <div class="cell on d-flex align-items-center justify-content-center"><svg><use href="#shade" /></svg></div>
                <div class="cell d-flex align-items-center justify-content-center"><svg><use href="#pin" /></svg></div>
                <div class="vsep"></div>
                <div class="cell d-flex align-items-center justify-content-center"><svg><use href="#plane-e" /></svg></div>
                <div class="cell d-flex align-items-center justify-content-center"><svg><use href="#axis-e" /></svg></div>
                <div class="cell d-flex align-items-center justify-content-center"><svg><use href="#pts-e" /></svg></div>
                <div class="cell d-flex align-items-center justify-content-center"><svg><use href="#csys-e" /></svg></div>
                <div class="cell d-flex align-items-center justify-content-center"><svg><use href="#note-e" /></svg></div>
                <div class="vsep"></div>
                <div class="cell d-flex align-items-center justify-content-center"><svg><use href="#swap" /></svg></div>
                <div class="cell on d-flex align-items-center justify-content-center"><svg><use href="#dim-e" /></svg></div>
                <div class="cell on d-flex align-items-center justify-content-center"><svg><use href="#dim-e" /></svg></div>
                <div class="cell d-flex align-items-center justify-content-center"><svg><use href="#dim-e" /></svg></div>
                <div class="cell on d-flex align-items-center justify-content-center"><svg><use href="#dim-e" /></svg></div>
            </div>
            <div class="tool-row d-flex align-items-center">
                <div class="cell d-flex align-items-center justify-content-center"><svg><use href="#ibeam" /></svg></div>
                <div class="cell d-flex align-items-center justify-content-center"><svg><use href="#diam" /></svg></div>
                <div class="cell d-flex align-items-center justify-content-center"><svg><use href="#crossbox" /></svg></div>
                <div class="cell d-flex align-items-center justify-content-center"><svg><use href="#dotchk" /></svg></div>
                <div class="vsep"></div>
                <div class="cell d-flex align-items-center justify-content-center"><svg><use href="#curve-r" /></svg></div>
                <div class="vsep"></div>
                <div class="cell d-flex align-items-center justify-content-center"><svg><use href="#dim-r" /></svg></div>
                <div class="cell d-flex align-items-center justify-content-center"><svg><use href="#tri-r" /></svg></div>
                <div class="cell d-flex align-items-center justify-content-center"><svg><use href="#grid-r" /></svg></div>
                <div class="cell d-flex align-items-center justify-content-center"><svg><use href="#circ-r" /></svg></div>
                <div class="cell d-flex align-items-center justify-content-center"><svg><use href="#curve-r" /></svg></div>
                <div class="cell d-flex align-items-center justify-content-center"><svg><use href="#wav-r" /></svg></div>
                <div class="cell d-flex align-items-center justify-content-center"><svg><use href="#pink-r" /></svg></div>
                <div class="cell d-flex align-items-center justify-content-center"><svg><use href="#rain-r" /></svg></div>
                <div class="cell d-flex align-items-center justify-content-center"><svg><use href="#solid-r" /></svg></div>
                <div class="cell d-flex align-items-center justify-content-center"><svg><use href="#stack-r" /></svg></div>
                <div class="cell d-flex align-items-center justify-content-center"><svg><use href="#rsave" /></svg></div>
                <div class="cell d-flex align-items-center justify-content-center"><svg><use href="#rdel" /></svg></div>
                <div class="vsep"></div>
                <div class="cell d-flex align-items-center justify-content-center"><svg><use href="#cube-i" /></svg></div>
                <div class="cell d-flex align-items-center justify-content-center"><svg><use href="#cubel-i" /></svg></div>
                <div class="cell d-flex align-items-center justify-content-center"><svg><use href="#d1-i" /></svg></div>
                <div class="cell d-flex align-items-center justify-content-center"><svg><use href="#page-i" /></svg></div>
                <div class="cell d-flex align-items-center justify-content-center"><svg><use href="#gcube-i" /></svg></div>
                <div class="cell d-flex align-items-center justify-content-center"><svg><use href="#pipe-i" /></svg></div>
                <div class="vsep"></div>
                <div class="cell d-flex align-items-center justify-content-center"><svg><use href="#globe" /></svg></div>
                <div class="cell d-flex align-items-center justify-content-center"><svg><use href="#camera" /></svg></div>
                <div class="cell d-flex align-items-center justify-content-center"><svg><use href="#abox" /></svg></div>
                <div class="cell d-flex align-items-center justify-content-center"><svg><use href="#monitor" /></svg></div>
                <div class="vsep"></div>
                <div class="cell d-flex align-items-center justify-content-center"><svg><use href="#help" /></svg></div>
            </div>
        </div>

        <div class="dash d-flex">
            <div class="dash-left"><svg><use href="#sweep" /></svg></div>
            <div>
                <div class="dash-msg"><span class="dash-dot"></span>截面已经重定位到2维定向。</div>
                <div class="dash-icons d-flex align-items-center">
                    <div class="cell d-flex align-items-center justify-content-center"><svg><use href="#d-ref" /></svg></div>
                    <div class="cell on d-flex align-items-center justify-content-center"><svg><use href="#d-opt" /></svg></div>
                    <div class="cell d-flex align-items-center justify-content-center"><svg><use href="#d-tan" /></svg></div>
                    <div class="cell d-flex align-items-center justify-content-center"><svg><use href="#d-nrm" /></svg></div>
                    <div class="cell d-flex align-items-center justify-content-center"><svg><use href="#d-prop" /></svg></div>
                </div>
                <div class="dash-labels d-flex"><span>参照</span><span>选项</span><span>相切</span><span>属性</span></div>
            </div>
            <div class="dash-right">
                <div class="type-pick d-flex align-items-center justify-content-between"><span>尺寸</span><span class="tri-dn"></span></div>
                <div class="dash-btns d-flex align-items-center">
                    <svg viewBox="0 0 24 24" class="me-1"><path d="M8 4l10 8-10 8z" fill="#9aa4ac" /></svg>
                    <svg viewBox="0 0 24 24"><rect x="5" y="5" width="14" height="14" fill="#eee" stroke="#aab" /><path d="M8 12l3 3 5-6" fill="none" stroke="#aab" stroke-width="1.5" /></svg>
                    <svg viewBox="0 0 24 24" class="me-1"><circle cx="7" cy="14" r="5" fill="none" stroke="#aab" stroke-width="1.5" /><circle cx="17" cy="14" r="5" fill="none" stroke="#aab" stroke-width="1.5" /><path d="M12 13c0-3 3-5 8-6" fill="none" stroke="#aab" /></svg>
                    <div class="dash-ok d-flex align-items-center justify-content-center"><svg viewBox="0 0 24 24"><path d="M3 12l6 7L21 6" fill="none" stroke="#8a9298" stroke-width="4.500" /></svg></div>
                    <svg viewBox="0 0 24 24" class="ms-2"><path d="M4 4l16 16M20 4L4 20" stroke="#c82020" stroke-width="4.500" /></svg>
                </div>
            </div>
        </div>

        <div class="main-row d-flex">
            <div class="side">
                <div class="tab-row d-flex">
                    <div class="side-tab cur d-flex align-items-center justify-content-center"><svg><use href="#tree" /></svg></div>
                    <div class="side-tab d-flex align-items-center justify-content-center"><svg><use href="#folders" /></svg></div>
                    <div class="side-tab d-flex align-items-center justify-content-center"><svg><use href="#star-f" /></svg></div>
                </div>
                <div class="side-box">
                    <div class="side-head d-flex align-items-center">
                        <span>模型树</span>
                        <svg class="ms-auto"><use href="#tools" /></svg><span class="tri-dn ms-1 me-1"></span>
                        <svg><use href="#listd" /></svg><span class="tri-dn ms-1 me-2"></span>
                    </div>
                    <div class="tree-box d-flex flex-column">
                        <ul class="tree-list list-unstyled m-0">
                            <li class="tree-root d-flex align-items-center"><svg><use href="#cube" /></svg>VSS_YASUOGUAN_DUANPING.</li>
                            <li class="tree-item d-flex align-items-center"><svg><use href="#dplane" /></svg>RIGHT</li>
                            <li class="tree-item d-flex align-items-center"><svg><use href="#dplane" /></svg>TOP</li>
                            <li class="tree-item d-flex align-items-center"><svg><use href="#dplane" /></svg>FRONT</li>
                            <li class="tree-item d-flex align-items-center"><svg><use href="#dcsys" /></svg>PRT_CSYS_DEF</li>
                            <li class="tree-item d-flex align-items-center"><svg><use href="#dsketch" /></svg>草绘 1</li>
                            <li class="tree-item d-flex align-items-center"><svg><use href="#dins" /></svg>在此插入</li>
                            <li class="tree-item d-flex align-items-center"><svg><use href="#dsweep" /></svg><span class="spark">※</span>Var Sect Sweep 1</li>
                        </ul>
                        <div class="scroll-row d-flex align-items-center">
                            <span class="tri-l"></span>
                            <span class="scroll-thumb d-flex align-items-center justify-content-center">....</span>
                            <span class="tri-r"></span>
                        </div>
                    </div>
                </div>
            </div>
            <div class="sash position-relative">
                <div class="sash-grip position-absolute grip-one"><span class="grip-dot position-absolute"></span></div>
                <div class="sash-grip position-absolute grip-two"><span class="grip-dot position-absolute"></span></div>
            </div>
            <div class="canvas-area">
                <svg width="1042" height="799" viewBox="196 195 1042 799">
                    <g fill="none" stroke="#e8e84a" stroke-width="1">
                        <circle cx="482" cy="632" r="129.500" />
                        <path d="M196 632.500H1238M482.500 197V993" stroke-dasharray="30 5 6 5" />
                        <circle cx="482" cy="632" r="4" />
                        <path d="M477 632h10M482 627v10" />
                    </g>
                    <g fill="none" stroke="#d6a860" stroke-width="1">
                        <path d="M357 532h21L577 722" />
                    </g>
                    <path d="M389 543l9 3-4 5zM574 720l-9-3 4-5z" fill="#d6a860" />
                    <text x="320" y="537" font-family="Liberation Mono" font-size="13" fill="#d9a860">sd3</text>
                </svg>
            </div>
            <div class="right-bar position-relative">
                <div class="rb-top position-absolute"></div>
                <div class="rb-row d-flex align-items-center"><div class="cell d-flex align-items-center justify-content-center"><svg><use href="#r-arrow" /></svg></div></div>
                <div class="rb-row d-flex align-items-center"><div class="cell d-flex align-items-center justify-content-center"><svg><use href="#r-line" /></svg></div><span class="rb-tri"></span></div>
                <div class="rb-row d-flex align-items-center"><div class="cell d-flex align-items-center justify-content-center"><svg><use href="#r-rect" /></svg></div><span class="rb-tri"></span></div>
                <div class="rb-row d-flex align-items-center"><div class="cell d-flex align-items-center justify-content-center"><svg><use href="#r-circ" /></svg></div><span class="rb-tri"></span></div>
                <div class="rb-row d-flex align-items-center"><div class="cell d-flex align-items-center justify-content-center"><svg><use href="#r-arc" /></svg></div><span class="rb-tri"></span></div>
                <div class="rb-row d-flex align-items-center"><div class="cell d-flex align-items-center justify-content-center"><svg><use href="#r-fillet" /></svg></div><span class="rb-tri"></span></div>
                <div class="rb-row d-flex align-items-center"><div class="cell d-flex align-items-center justify-content-center"><svg><use href="#r-cham" /></svg></div><span class="rb-tri"></span></div>
                <div class="rb-row d-flex align-items-center"><div class="cell d-flex align-items-center justify-content-center"><svg><use href="#r-spline" /></svg></div></div>
                <div class="rb-row d-flex align-items-center"><div class="cell d-flex align-items-center justify-content-center"><svg><use href="#r-x" /></svg></div><span class="rb-tri"></span></div>
                <div class="rb-row d-flex align-items-center"><div class="cell d-flex align-items-center justify-content-center"><svg><use href="#r-off" /></svg></div><span class="rb-tri"></span></div>
                <div class="rb-row d-flex align-items-center"><div class="cell d-flex align-items-center justify-content-center"><svg><use href="#r-dim" /></svg></div><span class="rb-tri"></span></div>
                <div class="rb-row d-flex align-items-center"><div class="cell d-flex align-items-center justify-content-center"><svg><use href="#r-mod" /></svg></div></div>
                <div class="rb-row d-flex align-items-center"><div class="cell d-flex align-items-center justify-content-center"><svg><use href="#r-cross" /></svg></div><span class="rb-tri"></span></div>
                <div class="rb-row d-flex align-items-center"><div class="cell d-flex align-items-center justify-content-center"><svg><use href="#r-text" /></svg></div></div>
                <div class="rb-row d-flex align-items-center"><div class="cell d-flex align-items-center justify-content-center"><svg><use href="#r-pal" /></svg></div></div>
                <div class="rb-row d-flex align-items-center"><div class="cell d-flex align-items-center justify-content-center"><svg><use href="#r-trim" /></svg></div><span class="rb-tri"></span></div>
                <div class="rb-row d-flex align-items-center"><div class="cell d-flex align-items-center justify-content-center"><svg><use href="#r-mir" /></svg></div><span class="rb-tri"></span></div>
                <div class="rb-row d-flex align-items-center"><div class="cell d-flex align-items-center justify-content-center"><svg><use href="#r-ok" /></svg></div></div>
                <div class="rb-row d-flex align-items-center"><div class="cell d-flex align-items-center justify-content-center"><svg><use href="#r-no" /></svg></div></div>
                <div class="rb-sep"></div>
                <div class="rb-row d-flex align-items-center"><div class="cell d-flex align-items-center justify-content-center"><svg><use href="#r-gwave" /></svg></div></div>
                <div class="rb-row d-flex align-items-center"><div class="cell d-flex align-items-center justify-content-center"><svg><use href="#r-plane" /></svg></div></div>
                <div class="rb-row d-flex align-items-center"><div class="cell d-flex align-items-center justify-content-center"><svg><use href="#r-axis" /></svg></div></div>
                <div class="rb-row d-flex align-items-center"><div class="cell d-flex align-items-center justify-content-center"><svg><use href="#r-crv" /></svg></div></div>
                <div class="rb-row d-flex align-items-center"><div class="cell d-flex align-items-center justify-content-center"><svg><use href="#r-pts" /></svg></div><span class="rb-tri"></span></div>
                <div class="rb-row d-flex align-items-center"><div class="cell d-flex align-items-center justify-content-center"><svg><use href="#r-csys" /></svg></div></div>
                <div class="rb-row d-flex align-items-center"><div class="cell d-flex align-items-center justify-content-center"><svg><use href="#r-anal" /></svg></div></div>
                <div class="rb-row d-flex align-items-center"><div class="cell d-flex align-items-center justify-content-center"><svg><use href="#r-chain" /></svg></div></div>
            </div>
        </div>

        <div class="task-bar d-flex align-items-center">
            <div class="start-btn d-flex align-items-center"><svg width="20" height="20"><use href="#flag" /></svg>Start</div>
            <div class="quick d-flex align-items-center">
                <svg viewBox="0 0 24 24"><rect x="6" y="2" width="12" height="20" rx="2" fill="#9fb4d8" stroke="#dfe7f5" /><path d="M9 6h6M9 10h6M9 14h6M9 18h6" stroke="#42598e" /></svg>
                <svg viewBox="0 0 24 24"><path d="M5 3h11l3 4v14H5z" fill="#e8eef8" stroke="#446" /><text x="8" y="18" font-size="12" fill="#2a5ab0" font-weight="700">e</text></svg>
                <svg><use href="#green-ie" /></svg>
                <span class="ms-1 opacity-75">»</span>
            </div>
            <div class="task-item d-flex align-items-center"><svg><use href="#green-ie" /></svg>PROE三維建模 - 中...</div>
            <div class="task-item d-flex align-items-center"><svg><use href="#folder-y" /></svg><span class="tight-run">D:\TDDOWNLOAD</span></div>
            <div class="task-item d-flex align-items-center"><svg><use href="#cube" /></svg><span class="small-run">VSS_YASUOGUAN_DU...</span></div>
            <div class="task-item d-flex align-items-center"><svg><use href="#folder-y" /></svg>C:\Documents and Set...</div>
            <div class="task-item cur d-flex align-items-center"><svg><use href="#cube" /></svg>关系</div>
            <div class="tray d-flex align-items-center">
                <svg viewBox="0 0 24 24"><path d="M6 4c6-3 13 0 12 8l2 10h-8L9 12 3 8z" fill="#2a8ad0" /><circle cx="14" cy="8" r="1.500" fill="#fff" /></svg>
                <svg viewBox="0 0 24 24"><rect x="2" y="3" width="20" height="18" fill="#7c8458" /><circle cx="12" cy="10" r="4" fill="#e0c0a0" /><path d="M5 21c1-6 13-6 14 0z" fill="#3a3020" /></svg>
                <svg viewBox="0 0 24 24"><path d="M3 4l4 3h10l4-3v12c0 4-4 6-9 6s-9-2-9-6z" fill="#e8a030" /><path d="M6 11h5M13 11h5" stroke="#222" stroke-width="2.400" /><path d="M6 20h12" stroke="#c02020" stroke-width="2" /></svg>
                <svg><use href="#plus-c" /></svg>
                <svg viewBox="0 0 24 24"><rect x="10" y="2" width="11" height="9" fill="#a8c8f0" stroke="#e8f0fc" /><rect x="3" y="12" width="11" height="9" fill="#6fa0e0" stroke="#e8f0fc" /></svg>
                <svg class="ms-1" viewBox="0 0 24 24"><path d="M12 2l9 3v7c0 5-4 8-9 10-5-2-9-5-9-10V5z" fill="#e8f4e0" stroke="#4a9a4a" /><path d="M13 6l-5 7h4l-1 5 5-7h-4z" fill="#48a048" /></svg>
                <span class="clock">10:11</span>
            </div>
        </div>

        <div class="top-strip position-absolute strip-a"></div>
        <div class="top-strip position-absolute strip-b"></div>

        <div class="caption position-absolute">2、进入<span class="latin-run">VSS</span>，草绘截面并输<br />入如图关系。<span class="cap-dot position-absolute"></span></div>

        <div class="net-box position-absolute d-flex align-items-center">
            <svg><use href="#plus-c" /></svg>
            <svg class="net-arrow ms-1" viewBox="0 0 9 11"><path d="M3 0h3v6h3L4.500 11 0 6h3z" fill="#2f9a3c" /></svg><span class="net-val">0.6K/S</span>
            <svg class="net-arrow ms-2" viewBox="0 0 9 11"><path d="M3 11h3V5h3L4.500 0 0 5h3z" fill="#e8a020" /></svg><span>12.4K/S</span>
            <svg class="ms-1" viewBox="0 0 24 24"><rect x="2" y="2" width="20" height="20" rx="3" fill="#c2d8e8" stroke="#8fb0c8" /><text x="6" y="18" font-size="17" font-weight="700" fill="#2a70c8" font-family="Liberation Sans">e</text></svg>
        </div>

        <div class="pick-box position-absolute">
            <div class="pick-head d-flex align-items-center">
                <svg width="14" height="14"><use href="#cube" /></svg><span>选取</span>
                <span class="pick-x d-flex align-items-center justify-content-center">✕</span>
            </div>
            <div class="pick-body">
                <div>选取1个项目。</div>
                <div class="pick-line d-flex justify-content-between pe-1">
                    <button type="button" class="btn pick-btn">确定</button>
                    <button type="button" class="btn pick-btn">取消</button>
                </div>
            </div>
        </div>

        <div class="thunder position-absolute d-flex align-items-center">
            <span class="thunder-ic d-flex align-items-center justify-content-center"><svg viewBox="0 0 24 24"><path d="M3 12L22 3l-5 18-4-6-3 4-1-5z" fill="#e8e8e8" /></svg></span>迅雷7
        </div>

        <div class="rel-win position-absolute">
            <div class="rel-title d-flex align-items-center">
                <svg><use href="#cube" /></svg><span>关系</span>
                <span class="cap-btn ms-auto d-flex align-items-center justify-content-center"><svg viewBox="0 0 14 14"><rect x="3" y="9" width="6" height="2" fill="#fff" /></svg></span>
                <span class="cap-btn d-flex align-items-center justify-content-center"><svg viewBox="0 0 14 14"><rect x="2" y="2" width="10" height="10" fill="none" stroke="#fff" stroke-width="1.500" /><path d="M2 3h10" stroke="#fff" stroke-width="2" /></svg></span>
                <span class="cap-btn close d-flex align-items-center justify-content-center"><svg viewBox="0 0 14 14"><path d="M2 2l10 10M12 2L2 12" stroke="#fff" stroke-width="2" /></svg></span>
            </div>
            <div class="rel-menu d-flex align-items-center"><span>文件</span><span>编辑</span><span>插入</span><span>参数</span><span>实用工具</span><span>显示</span></div>
            <div class="find-group">
                <span class="find-legend position-absolute">查找范围</span>
                <div class="d-flex align-items-center">
                    <div class="combo d-flex align-items-center justify-content-between combo-a"><span>剖面</span><span class="tri-dn"></span></div>
                    <div class="pick-arrow d-flex align-items-center justify-content-center"><svg viewBox="0 0 24 24"><path d="M7 3v15l4-4 3 7 3-1-3-7h6z" fill="#555" /></svg></div>
                    <div class="combo d-flex align-items-center justify-content-between combo-b"><span>S2D0003</span><span class="tri-dn"></span></div>
                </div>
            </div>
            <div class="sect-bar d-flex align-items-center"><span class="tri-w"></span><span>关系</span></div>
            <div class="rel-tools d-flex align-items-center">
                <div class="cell d-flex align-items-center justify-content-center"><svg><use href="#ln-undo" /></svg></div>
                <div class="cell d-flex align-items-center justify-content-center"><svg><use href="#ln-redo" /></svg></div>
                <div class="cell d-flex align-items-center justify-content-center"><svg><use href="#ln-cut" /></svg></div>
                <div class="cell d-flex align-items-center justify-content-center"><svg><use href="#ln-copy" /></svg></div>
                <div class="cell d-flex align-items-center justify-content-center"><svg><use href="#ln-paste" /></svg></div>
                <div class="cell d-flex align-items-center justify-content-center"><svg><use href="#ln-del" /></svg></div>
                <div class="rel-sep"></div>
                <div class="cell d-flex align-items-center justify-content-center"><svg><use href="#ln-d1" /></svg></div>
                <div class="cell d-flex align-items-center justify-content-center"><svg><use href="#ln-eq" /></svg></div>
                <div class="cell push2 d-flex align-items-center justify-content-center"><svg><use href="#ln-dim" /></svg></div>
                <div class="rel-sep"></div>
                <div class="cell d-flex align-items-center justify-content-center"><svg><use href="#ln-therm" /></svg></div>
                <div class="rel-sep"></div>
                <div class="cell pull2 d-flex align-items-center justify-content-center"><svg><use href="#ln-fx" /></svg></div>
                <div class="mini w14 d-flex align-items-center justify-content-center">▾</div>
                <div class="cell pull2 d-flex align-items-center justify-content-center"><svg><use href="#ln-br" /></svg></div>
                <div class="cell d-flex align-items-center justify-content-center"><svg><use href="#ln-weight" /></svg></div>
                <div class="rel-sep"></div>
                <div class="cell d-flex align-items-center justify-content-center"><svg><use href="#ln-list" /></svg></div>
                <div class="cell push2 d-flex align-items-center justify-content-center"><svg><use href="#ln-check" /></svg></div>
                <div class="rel-sep"></div>
            </div>
            <div class="rel-edit d-flex">
                <div class="op-col">
                    <span class="d-flex justify-content-center">+</span>
                    <span class="d-flex justify-content-center">-</span>
                    <span class="d-flex justify-content-center">×</span>
                    <span class="d-flex justify-content-center">/</span>
                    <span class="d-flex justify-content-center">^</span>
                    <div class="op-line"></div>
                    <span class="d-flex justify-content-center">()</span>
                    <span class="d-flex justify-content-center">[]</span>
                    <div class="op-line"></div>
                    <span class="d-flex justify-content-center">=</span>
                </div>
                <div class="code-area">m=floor(trajpar*20)
if m&lt;=1
sd3=40
endif
if m&gt;1&amp;m&lt;18
sd3=40+sin(trajpar*360*140)
else
sd3=40
<span class="caret-bar">endif</span></div>
            </div>
            <div class="sect-bar sect-low d-flex align-items-center"><span class="tri-wr"></span><span>局部参数</span></div>
            <div class="rel-foot d-flex justify-content-end">
                <button type="button" class="btn rel-btn dflt">确定</button>
                <button type="button" class="btn rel-btn">重置</button>
                <button type="button" class="btn rel-btn">取消</button>
            </div>
        </div>

        <div class="mark-text position-absolute">BBS.CHINADE.NET</div>
    </div>

    <script src="https://cdn.jsdelivr.net/npm/bootstrap@5.3.0/dist/js/bootstrap.bundle.min.js"></script>
</body>

</html>
